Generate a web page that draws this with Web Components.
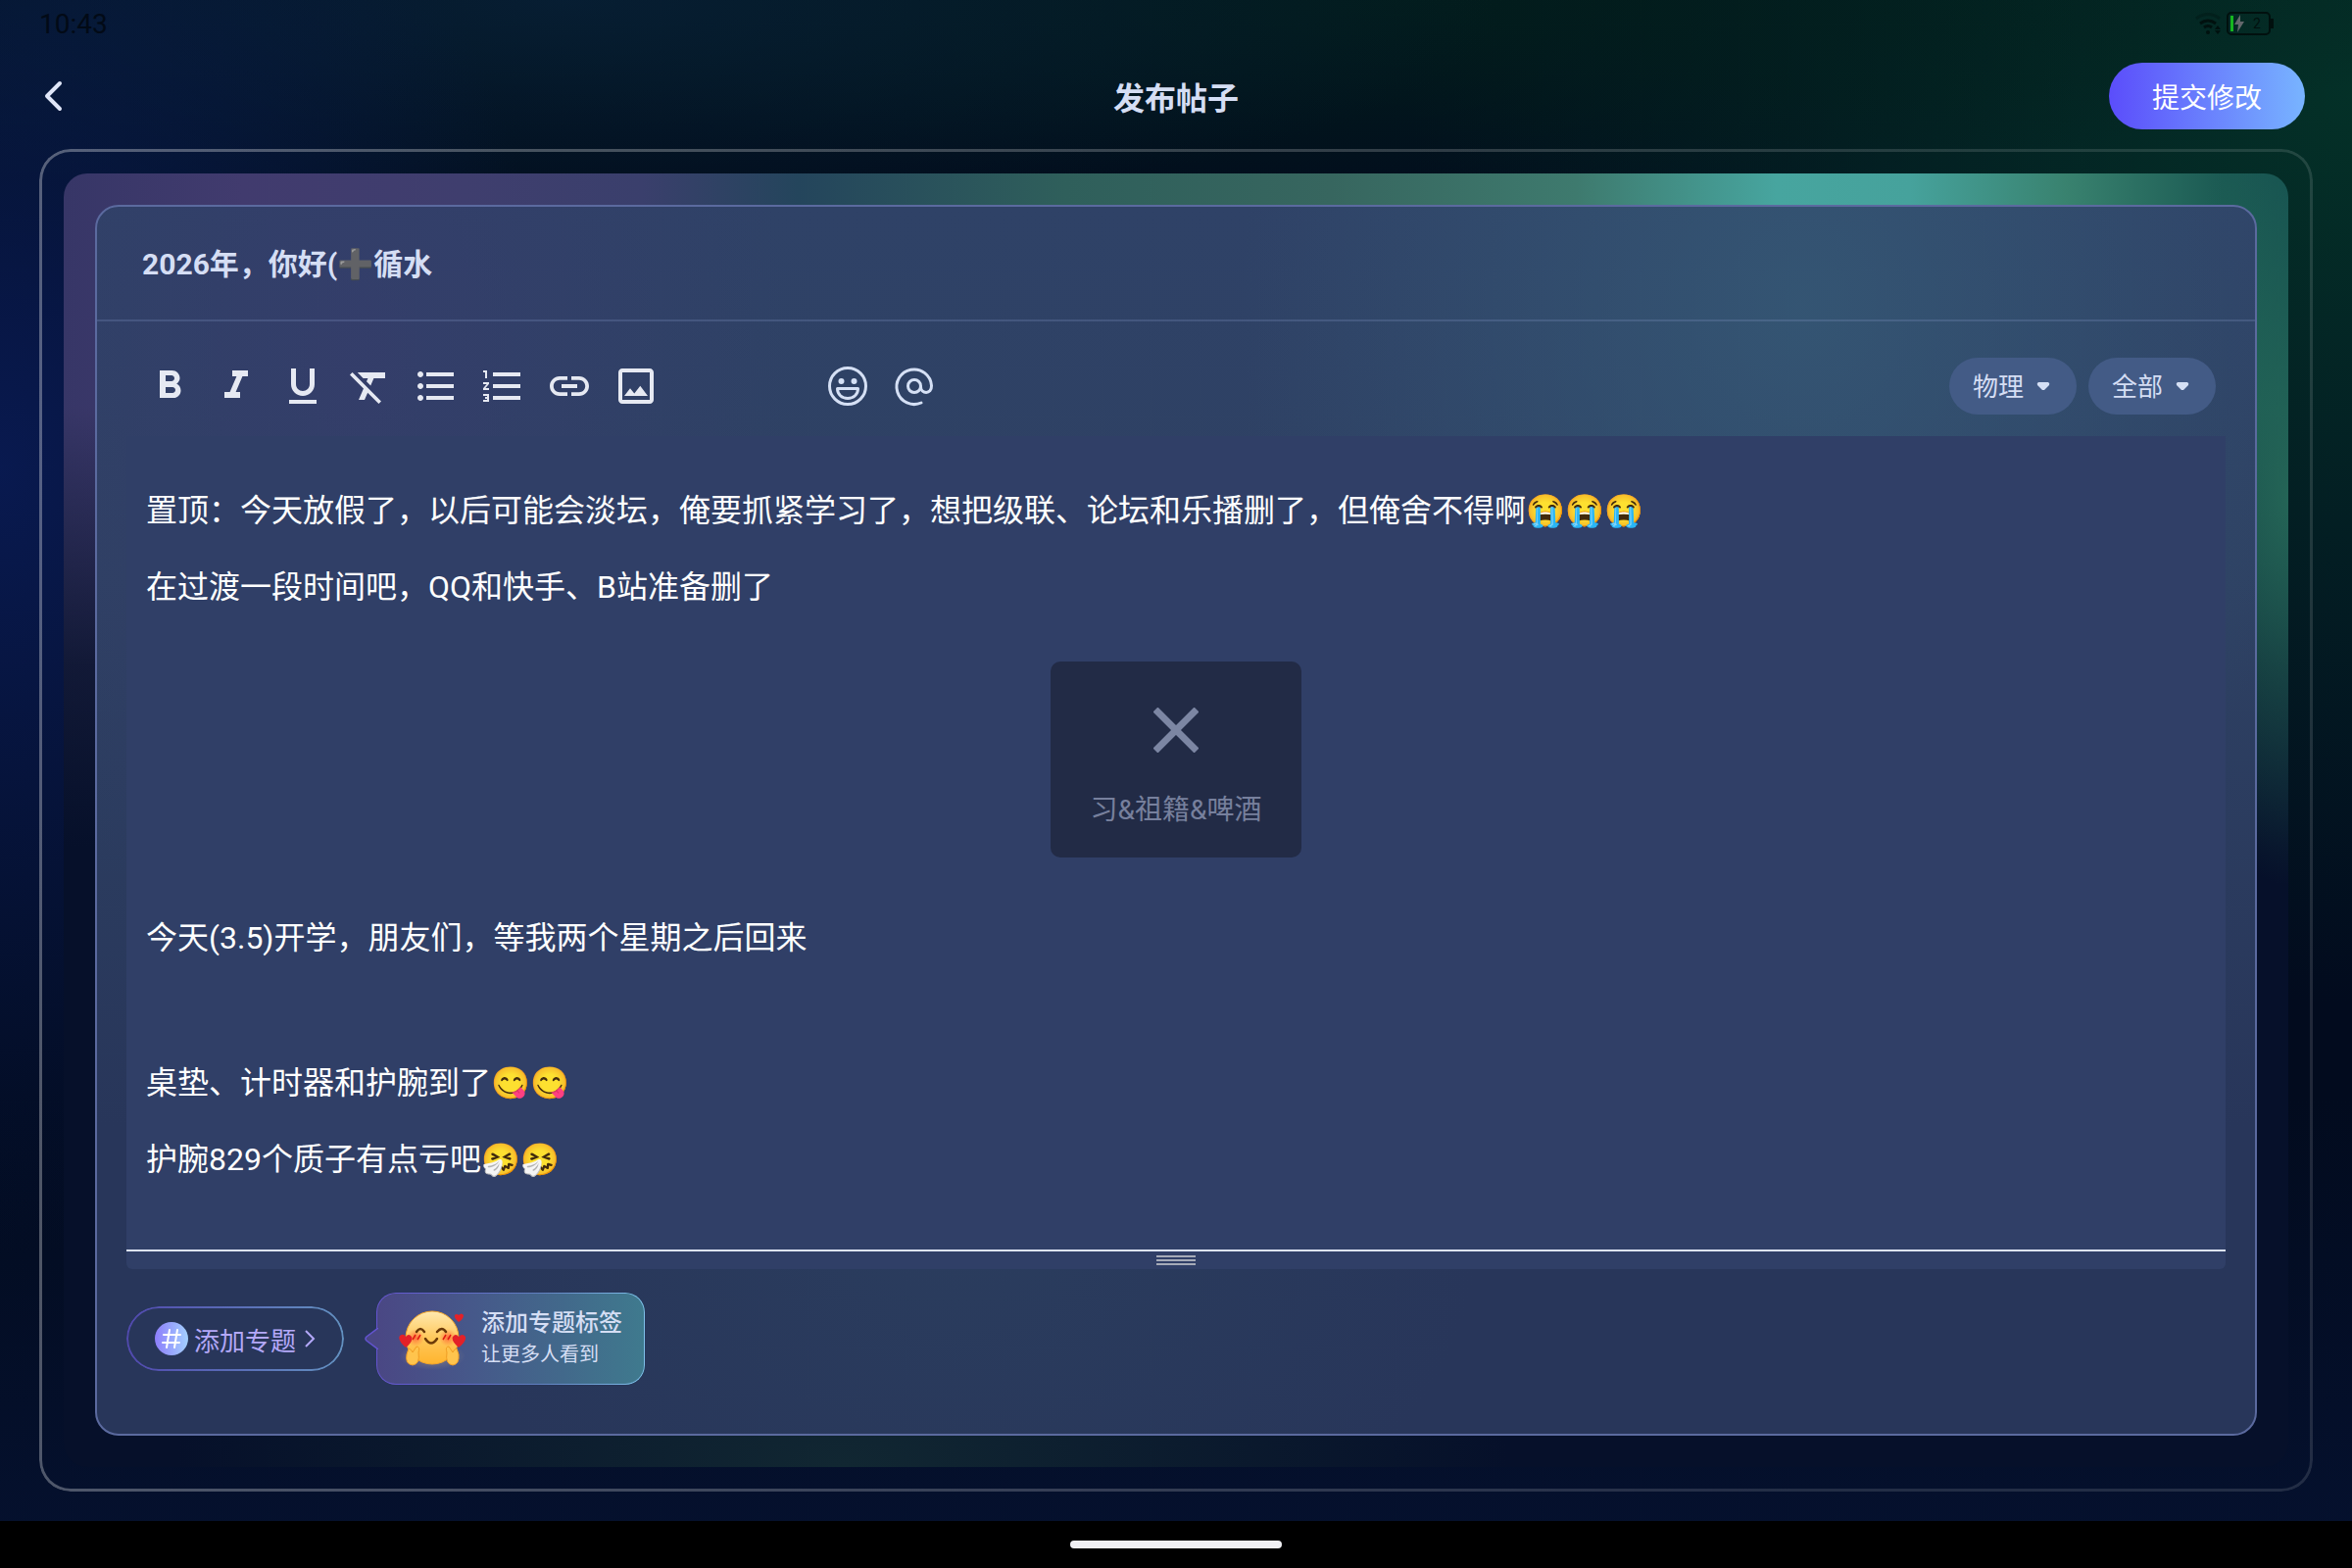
<!DOCTYPE html>
<html lang="zh-CN">
<head>
<meta charset="UTF-8">
<meta name="viewport" content="width=device-width, initial-scale=1">
<title>发布帖子</title>
<style>
    html, body {
        margin: 0;
        min-height: 100%;
    }

    body {
        font-family: Roboto, "Noto Sans CJK SC", sans-serif;
        color: #d5def4;
        background: #030b20;
    }
</style>
</head>
<body>
<post-page>
    <status-bar slot="status" time="10:43" level="2"></status-bar>
    <page-header slot="header" heading="发布帖子" action="提交修改"></page-header>
    <post-card>
        <post-title slot="title" value="2026年，你好(➕循水"></post-title>
        <editor-toolbar slot="toolbar">
            <drop-down label="学科" value="物理"></drop-down>
            <drop-down label="可见范围" value="全部"></drop-down>
        </editor-toolbar>
        <post-editor>
            <p>置顶：今天放假了，以后可能会淡坛，俺要抓紧学习了，想把级联、论坛和乐播删了，但俺舍不得啊😭😭😭</p>
            <p>在过渡一段时间吧，QQ和快手、B站准备删了</p>
            <broken-image>习&amp;祖籍&amp;啤酒</broken-image>
            <p>今天(3.5)开学，朋友们，等我两个星期之后回来</p>
            <p class="blank"></p>
            <p>桌垫、计时器和护腕到了😋😋</p>
            <p>护腕829个质子有点亏吧🤧🤧</p>
        </post-editor>
        <topic-button slot="footer">添加专题</topic-button>
        <topic-hint slot="footer">
            添加专题标签
            <span slot="sub">让更多人看到</span>
        </topic-hint>
    </post-card>
</post-page>

<script>
class BaseElement extends HTMLElement {
    connectedCallback() {
        if (this.shadowRoot) return;
        this.attachShadow({ mode: 'open' });
        this.shadowRoot.innerHTML = this.template();
    }
}

class PostPage extends BaseElement {
    template() {
        return `
        <style>
            :host {
                display: flex;
                flex-direction: column;
                min-height: 100vh;
                background:
                    radial-gradient(ellipse 24% 50% at 0% 30%, rgba(10, 28, 88, 0.85), transparent),
                    radial-gradient(ellipse 40% 14% at 24% 0%, rgba(8, 32, 56, 0.8), transparent),
                    radial-gradient(ellipse 45% 12% at 60% 0%, rgba(2, 30, 28, 0.85), transparent),
                    radial-gradient(ellipse 40% 58% at 100% 6%, rgba(4, 50, 40, 0.95), transparent),
                    linear-gradient(to bottom, #02121c, #020b1e 20%, #020b1e 70%, #05112f);
            }

            .frame {
                position: relative;
                flex: 1;
                display: flex;
                margin: 0 40px 30px;
                padding: 25px;
            }

            .frame::before {
                content: "";
                position: absolute;
                inset: 0;
                padding: 3px;
                border-radius: 32px;
                background: linear-gradient(100deg, rgba(255, 255, 255, 0.32), rgba(255, 255, 255, 0.12) 80%);
                mask: linear-gradient(#000 0 0) content-box exclude, linear-gradient(#000 0 0);
                pointer-events: none;
            }

            .glow {
                flex: 1;
                display: flex;
                min-width: 0;
                padding: 32px;
                border-radius: 24px;
                background:
                    radial-gradient(ellipse 30% 24% at 35% 100%, rgba(28, 62, 58, 0.5), transparent),
                    radial-gradient(ellipse 6% 30% at 100% 25%, rgba(38, 104, 88, 0.9), rgba(38, 104, 88, 0.4) 55%, transparent),
                    linear-gradient(to bottom, transparent, transparent 18%, rgba(5, 15, 38, 0.75) 38%, #06102a 52%),
                    linear-gradient(to right, #373667, #413b6e 8%, #3f3e6e 18%, #3a3f6c 26%, #24455c 33%, #2f5f5b 45%, #37665f 57%, #3e7a6e 68%, #47a59f 77%, #46a29c 83%, #39826f 90%, #1b5a53 97%, #155150);
            }

            .home {
                display: flex;
                height: 48px;
                background: #000;
            }

            .home::before {
                content: "";
                width: 216px;
                height: 8px;
                margin: auto;
                border-radius: 4px;
                background: #f0f0f4;
            }
        </style>
        <slot name="status"></slot>
        <slot name="header"></slot>
        <div class="frame"><div class="glow"><slot></slot></div></div>
        <div class="home"></div>
        `;
    }
}

class StatusBar extends BaseElement {
    template() {
        return `
        <style>
            :host {
                display: flex;
                justify-content: space-between;
                align-items: center;
                height: 48px;
                padding: 0 80px 0 40px;
                font-size: 28px;
                color: #020a16;
            }

            .icons {
                display: flex;
                align-items: center;
                gap: 6px;
            }

            .battery {
                display: flex;
                align-items: center;
                width: 45px;
                height: 24px;
                box-sizing: border-box;
                padding-left: 2px;
                gap: 1px;
                border: 2px solid #01100e;
                border-radius: 5px;
                font-size: 14px;
                color: #01100e;
            }

            .fill {
                width: 3px;
                height: 16px;
                background: #16b61f;
            }

            .level {
                flex: 1;
                text-align: center;
            }

            .nub {
                width: 3px;
                height: 10px;
                margin-left: -6px;
                background: #01100e;
            }
        </style>
        <span>${this.getAttribute('time')}</span>
        <div class="icons">
            <svg width="26" height="22" viewBox="0 0 26 22" fill="none" stroke="#01110f" stroke-width="3">
                <path d="M1 6Q13-3 25 6" stroke="#02201c"/>
                <path d="M5 11q8-6 16 0M9 15q4-3 8 0"/>
                <circle cx="13" cy="20" r="2" fill="#01110f" stroke="none"/>
                <path d="M20 17l3-4 3 4zM20 18l3 4 3-4z" fill="#01110f" stroke="none"/>
            </svg>
            <div class="battery">
                <div class="fill"></div>
                <svg width="10" height="18" viewBox="0 0 10 18"><path d="M6 0L0 10h4l-1 8 7-11H6z" fill="#63676b"/></svg>
                <span class="level">${this.getAttribute('level')}</span>
            </div>
            <div class="nub"></div>
        </div>
        `;
    }
}

class PageHeader extends BaseElement {
    template() {
        return `
        <style>
            :host {
                display: grid;
                grid-template-columns: 1fr auto 1fr;
                align-items: center;
                padding: 16px 40px 20px;
            }

            button {
                border: none;
                font: inherit;
                cursor: pointer;
            }

            .back {
                display: flex;
                justify-self: start;
                padding: 0 4px;
                background: none;
            }

            h1 {
                margin: 0;
                font-size: 32px;
                font-weight: 700;
            }

            .submit {
                justify-self: end;
                width: 200px;
                height: 68px;
                margin-right: 8px;
                border-radius: 34px;
                background: linear-gradient(to right, #5b4dfb, #78b4ff);
                color: #fff;
                font-size: 28px;
            }
        </style>
        <button class="back" aria-label="返回">
            <svg width="22" height="34" viewBox="0 0 22 34" fill="none" stroke="#dfe6f8" stroke-width="4" stroke-linecap="round" stroke-linejoin="round"><path d="M17 4L4 17l13 13"/></svg>
        </button>
        <h1>${this.getAttribute('heading')}</h1>
        <button class="submit">${this.getAttribute('action')}</button>
        `;
    }
}

class PostCard extends BaseElement {
    template() {
        return `
        <style>
            :host {
                flex: 1;
                display: flex;
                flex-direction: column;
                min-width: 0;
                border: 2px solid #5b6a9f;
                border-radius: 24px;
                background:
                    radial-gradient(ellipse 26% 52% at 79% 8%, rgba(53, 88, 117, 0.85), transparent),
                    radial-gradient(ellipse 20% 50% at 12% 12%, rgba(54, 60, 108, 0.7), transparent),
                    radial-gradient(ellipse 24% 30% at 40% 84%, rgba(44, 65, 96, 0.6), transparent),
                    linear-gradient(to bottom, #2f4267, #2e4163 30%, #28365a 75%, #28365a);
            }

            footer {
                display: flex;
                align-items: center;
                padding: 24px 30px 50px;
                gap: 33px;
            }
        </style>
        <slot name="title"></slot>
        <slot name="toolbar"></slot>
        <slot></slot>
        <footer><slot name="footer"></slot></footer>
        `;
    }
}

class PostTitle extends BaseElement {
    template() {
        return `
        <style>
            :host {
                display: flex;
                border-bottom: 2px solid rgba(130, 150, 200, 0.25);
            }

            input {
                flex: 1;
                height: 115px;
                box-sizing: border-box;
                padding: 0 46px 4px;
                border: none;
                outline: none;
                background: none;
                color: #d5def4;
                font: inherit;
                font-size: 30px;
                font-weight: 700;
            }
        </style>
        <input type="text" aria-label="标题" value="${this.getAttribute('value')}">
        `;
    }
}

const TOOLS = [
    ['加粗', 'M15.6 10.79c.97-.67 1.65-1.77 1.65-2.79 0-2.26-1.75-4-4-4H7v14h7.04c2.09 0 3.71-1.7 3.71-3.79 0-1.52-.86-2.82-2.15-3.42zM10 6.5h3c.83 0 1.5.67 1.5 1.5s-.67 1.5-1.5 1.5h-3v-3zm3.5 9H10v-3h3.5c.83 0 1.5.67 1.5 1.5s-.67 1.5-1.5 1.5z'],
    ['斜体', 'M10 4v3h2.21l-3.42 8H6v3h8v-3h-2.21l3.42-8H18V4z'],
    ['下划线', 'M12 17c3.31 0 6-2.69 6-6V3h-2.5v8c0 1.93-1.57 3.5-3.5 3.5S8.5 12.93 8.5 11V3H6v8c0 3.31 2.69 6 6 6zm-7 2v2h14v-2H5z'],
    ['清除格式', 'M3.27 5L2 6.27l6.97 6.97L6.5 19h3l1.57-3.66L16.73 21 18 19.73 3.55 5.27 3.27 5zM6 5v.18L8.82 8h2.4l-.72 1.68 2.1 2.1L14.21 8H20V5H6z'],
    ['无序列表', 'M4 10.5c-.83 0-1.5.67-1.5 1.5s.67 1.5 1.5 1.5 1.5-.67 1.5-1.5-.67-1.5-1.5-1.5zm0-6c-.83 0-1.5.67-1.5 1.5S3.17 7.5 4 7.5 5.5 6.83 5.5 6 4.83 4.5 4 4.5zm0 12c-.83 0-1.5.68-1.5 1.5s.68 1.5 1.5 1.5 1.5-.68 1.5-1.5-.67-1.5-1.5-1.5zM7 19h14v-2H7v2zm0-6h14v-2H7v2zm0-8v2h14V5H7z'],
    ['有序列表', 'M2 17h2v.5H3v1h1v.5H2v1h3v-4H2v1zm1-9h1V4H2v1h1v3zm-1 3h1.8L2 13.1v.9h3v-1H3.2L5 10.9V10H2v1zm5-6v2h14V5H7zm0 14h14v-2H7v2zm0-6h14v-2H7v2z'],
    ['链接', 'M3.9 12c0-1.71 1.39-3.1 3.1-3.1h4V7H7c-2.76 0-5 2.24-5 5s2.24 5 5 5h4v-1.9H7c-1.71 0-3.1-1.39-3.1-3.1zM8 13h8v-2H8v2zm9-6h-4v1.9h4c1.71 0 3.1 1.39 3.1 3.1s-1.39 3.1-3.1 3.1h-4V17h4c2.76 0 5-2.24 5-5s-2.24-5-5-5z'],
    ['图片', 'M19 5v14H5V5h14m0-2H5c-1.1 0-2 .9-2 2v14c0 1.1.9 2 2 2h14c1.1 0 2-.9 2-2V5c0-1.1-.9-2-2-2zm-4.86 8.86l-3 3.87L9 13.14 6 17h12l-3.86-5.14z']
];

class EditorToolbar extends BaseElement {
    template() {
        return `
        <style>
            :host {
                display: flex;
                justify-content: space-between;
                align-items: center;
                padding: 37px 40px 22px 50px;
            }

            .tools, .filters {
                display: flex;
                gap: 20px;
            }

            .filters {
                gap: 12px;
            }

            button {
                display: flex;
                padding: 0;
                border: none;
                background: none;
                cursor: pointer;
            }

            .gap {
                width: 128px;
            }
        </style>
        <div class="tools">
            ${TOOLS.map(([label, d]) => `<button aria-label="${label}"><svg width="48" height="48" viewBox="0 0 24 24" fill="#e6e9f2"><path d="${d}"/></svg></button>`).join('')}
            <span class="gap"></span>
            <button aria-label="表情">
                <svg width="48" height="48" viewBox="0 0 48 48" fill="none" stroke="#d5e0f5" stroke-width="3" stroke-linejoin="round">
                    <circle cx="24" cy="24" r="18.5"/>
                    <path d="M13.500 26.500h21c0 6-4.500 10-10.500 10s-10.500-4-10.500-10z"/>
                    <circle cx="17.500" cy="19" r="3" fill="#d5e0f5" stroke="none"/>
                    <circle cx="30.500" cy="19" r="3" fill="#d5e0f5" stroke="none"/>
                </svg>
            </button>
            <button aria-label="提及">
                <svg width="48" height="48" viewBox="0 0 48 48" fill="none" stroke="#d5e0f5" stroke-width="3" stroke-linecap="round">
                    <circle cx="24" cy="24" r="6.500"/>
                    <path d="M31 41a17.800 17.800 0 1 1 10.500-17.500c.3 9.500-11 8.500-11 1"/>
                </svg>
            </button>
        </div>
        <div class="filters"><slot></slot></div>
        `;
    }
}

class DropDown extends BaseElement {
    template() {
        return `
        <style>
            :host {
                display: grid;
                align-items: center;
                width: 130px;
            }

            select, svg {
                grid-area: 1 / 1;
            }

            select {
                appearance: none;
                height: 58px;
                padding: 2px 48px 0 24px;
                border: none;
                border-radius: 29px;
                background: #435b86;
                color: #d5def4;
                font: inherit;
                font-size: 26px;
                cursor: pointer;
            }

            svg {
                justify-self: end;
                margin-right: 27px;
                pointer-events: none;
            }
        </style>
        <select aria-label="${this.getAttribute('label')}"><option>${this.getAttribute('value')}</option></select>
        <svg width="14" height="9" viewBox="0 0 14 9"><path d="M2 0h10q2 1 1 3L8 8H6L1 3Q0 1 2 0z" fill="#d5e0f5"/></svg>
        `;
    }
}

class PostEditor extends BaseElement {
    template() {
        return `
        <style>
            :host {
                flex: 1;
                display: flex;
                flex-direction: column;
                margin: 0 30px;
                border-radius: 0 0 6px 6px;
                background: #303f67;
            }

            .content {
                flex: 1;
                display: flex;
                flex-direction: column;
                gap: 40px;
                padding: 57px 20px 60px;
                border-bottom: 2px solid #dce3f4;
                outline: none;
                color: #fff;
                font-size: 32px;
                line-height: 38px;
            }

            ::slotted(p) {
                margin: 0;
            }

            ::slotted(.blank) {
                height: 30px;
            }

            .grip {
                align-self: center;
                display: flex;
                flex-direction: column;
                justify-content: center;
                gap: 2px;
                width: 40px;
                height: 18px;
            }

            .grip i {
                height: 2px;
                background: #a6abb8;
            }
        </style>
        <div class="content" contenteditable="true" spellcheck="false" role="textbox" aria-label="正文"><slot></slot></div>
        <div class="grip"><i></i><i></i><i></i></div>
        `;
    }
}

class BrokenImage extends BaseElement {
    template() {
        return `
        <style>
            :host {
                align-self: center;
                display: flex;
                flex-direction: column;
                align-items: center;
                gap: 40px;
                width: 256px;
                height: 200px;
                box-sizing: border-box;
                margin: 17px 0 23px;
                padding-top: 47px;
                border-radius: 10px;
                background: #222b46;
                color: #77809d;
                font-size: 28px;
            }
        </style>
        <svg width="46" height="46" viewBox="0 0 46 46" stroke="#7c86a3" stroke-width="7"><path d="M2 2l42 42M44 2L2 44"/></svg>
        <span><slot></slot></span>
        `;
    }
}

class TopicButton extends BaseElement {
    template() {
        return `
        <style>
            button {
                position: relative;
                display: flex;
                align-items: center;
                width: 222px;
                height: 66px;
                padding: 0 29px;
                border: none;
                border-radius: 33px;
                background: none;
                color: #b3a8f8;
                font: inherit;
                font-size: 26px;
                white-space: nowrap;
                cursor: pointer;
            }

            button::before {
                content: "";
                position: absolute;
                inset: 0;
                padding: 2px;
                border-radius: 33px;
                background: linear-gradient(to right, #5149ae, #6391c0);
                mask: linear-gradient(#000 0 0) content-box exclude, linear-gradient(#000 0 0);
            }

            .text {
                margin: 0 8px 0 6px;
            }
        </style>
        <button>
            <svg width="34" height="34" viewBox="0 0 34 34">
                <defs><linearGradient id="g"><stop stop-color="#8d7dfb"/><stop offset="1" stop-color="#a3d0ff"/></linearGradient></defs>
                <circle cx="17" cy="17" r="17" fill="url(#g)"/>
                <path d="M15 8l-3 18M23 8l-3 18M9 13h17M8 21h17" fill="none" stroke="#fff" stroke-width="2" stroke-linecap="round"/>
            </svg>
            <span class="text"><slot></slot></span>
            <svg width="12" height="18" viewBox="0 0 12 18" fill="none" stroke="#b3a8f8" stroke-width="2"><path d="M2 1l8 8-8 8"/></svg>
        </button>
        `;
    }
}

class TopicHint extends BaseElement {
    template() {
        return `
        <style>
            :host {
                position: relative;
                display: flex;
                align-items: center;
                gap: 16px;
                width: 274px;
                height: 94px;
                box-sizing: border-box;
                padding-left: 23px;
                border-radius: 20px;
                background: linear-gradient(to right, #4a4784, #46588a 35%, #42698b 70%, #3f7a8e);
                line-height: 32px;
                white-space: nowrap;
            }

            :host::before {
                content: "";
                position: absolute;
                inset: 0;
                padding: 1px;
                border-radius: 20px;
                background: linear-gradient(to right, #6354d0, #607fbf 60%, #7fc0ea);
                mask: linear-gradient(#000 0 0) content-box exclude, linear-gradient(#000 0 0);
            }

            /* speech bubble tail */
            .tail {
                position: absolute;
                right: calc(100% - 2px);
                top: 36px;
            }

            strong {
                display: block;
                font-size: 24px;
                font-weight: 500;
            }

            small {
                display: block;
                font-size: 20px;
            }
        </style>
        <svg class="tail" width="14" height="22" viewBox="0 0 14 22"><path d="M14 0L2 9q-2 2 0 4l12 9" fill="#4a4784" stroke="#6354d0" stroke-width="1.500"/></svg>
        <svg width="68" height="64" viewBox="0 0 68 64">
            <defs>
                <linearGradient id="face" x2="0" y2="1"><stop stop-color="#ffe9b0"/><stop offset=".5" stop-color="#ffc95c"/><stop offset="1" stop-color="#ffb42e"/></linearGradient>
                <radialGradient id="blush"><stop stop-color="#ff5a34" stop-opacity=".85"/><stop offset="1" stop-color="#ff7a3c" stop-opacity="0"/></radialGradient>
                <radialGradient id="halo"><stop stop-color="#ffd27a" stop-opacity=".35"/><stop offset="1" stop-color="#ffd27a" stop-opacity="0"/></radialGradient>
            </defs>
            <ellipse cx="34" cy="50" rx="34" ry="14" fill="url(#halo)"/>
            <circle cx="34" cy="31" r="27" fill="url(#face)" stroke="#f3a52a"/>
            <circle cx="17" cy="31" r="9" fill="url(#blush)"/>
            <circle cx="50" cy="31" r="9" fill="url(#blush)"/>
            <path d="M14 33l3-5M19 33l3-5M45 33l3-5M50 33l3-5" stroke="#e01b12" stroke-width="1.500"/>
            <path d="M18 25q4-6 8 0M39 25q5-6 9 0M27 32q6 9 12 0" fill="none" stroke="#6b3a08" stroke-width="2.500" stroke-linecap="round"/>
            <path d="M10 42q3 1 4 4l4-6q4 0 2 6 2 12-6 13-8-1-6-11zM59 42q-3 1-4 4l-4-6q-4 0-2 6-2 12 6 13 7-1 6-11z" fill="#ffc44d" stroke="#f09d24"/>
            <path d="M7 41Q-2 33 1 29q4-3 6 1 3-4 6 0 2 5-6 11zM61 41q-8-7-6-11 3-4 6 0 4-4 7 0 1 5-7 11zM61 15q-5-4-4-7 2-2 4 0 3-3 5 0 0 4-5 7z" fill="#e32128"/>
        </svg>
        <div>
            <strong><slot></slot></strong>
            <small><slot name="sub"></slot></small>
        </div>
        `;
    }
}

customElements.define("post-page", PostPage);
customElements.define("status-bar", StatusBar);
customElements.define("page-header", PageHeader);
customElements.define("post-card", PostCard);
customElements.define("post-title", PostTitle);
customElements.define("editor-toolbar", EditorToolbar);
customElements.define("drop-down", DropDown);
customElements.define("post-editor", PostEditor);
customElements.define("broken-image", BrokenImage);
customElements.define("topic-button", TopicButton);
customElements.define("topic-hint", TopicHint);
</script>
</body>
</html>
